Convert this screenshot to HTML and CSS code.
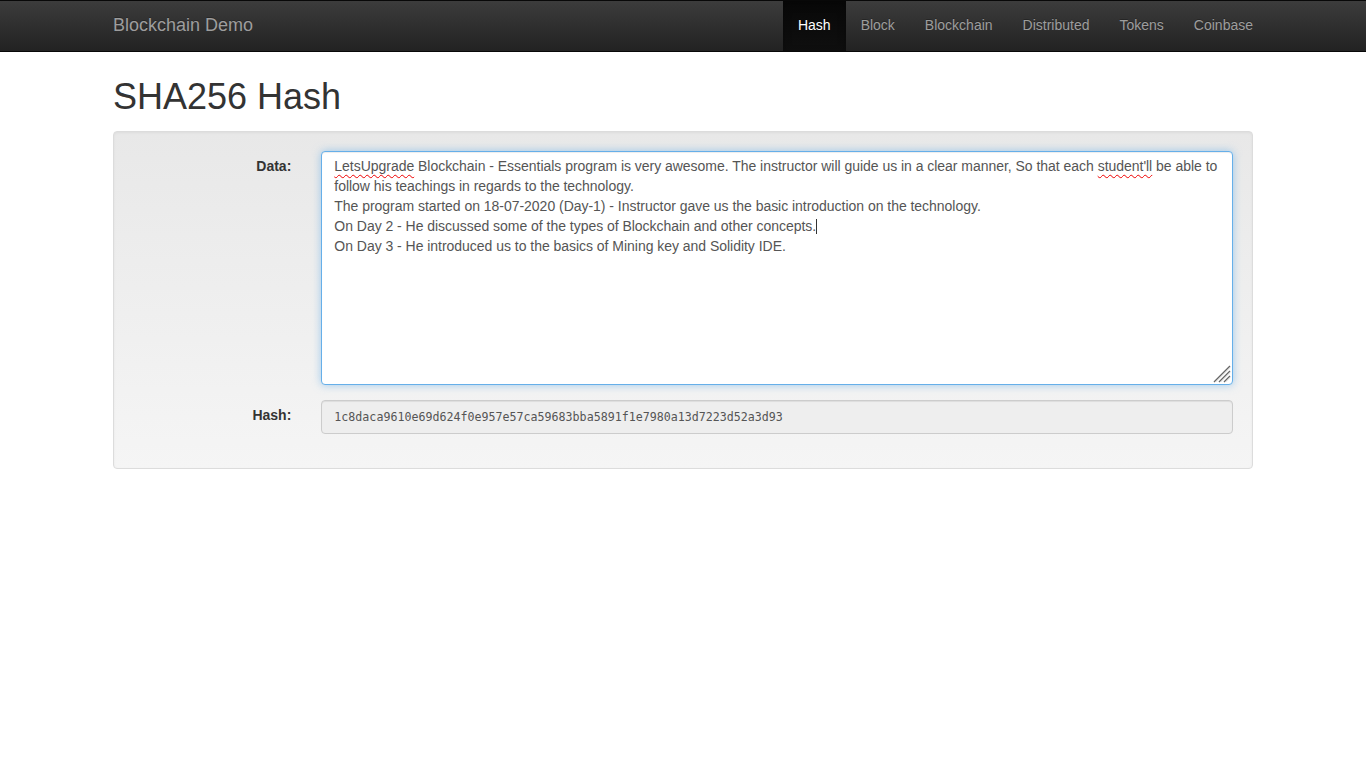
FILE: index.html
```html
<!DOCTYPE html>
<html lang="en">
<head>
<meta charset="utf-8">
<title>Blockchain Demo</title>
<link rel="stylesheet" href="styles.css">
</head>
<body>
<nav class="navbar">
  <div class="container navbar-inner">
    <a class="brand" href="#">Blockchain Demo</a>
    <ul class="nav">
      <li class="active"><a href="#">Hash</a></li>
      <li><a href="#">Block</a></li>
      <li><a href="#">Blockchain</a></li>
      <li><a href="#">Distributed</a></li>
      <li><a href="#">Tokens</a></li>
      <li><a href="#">Coinbase</a></li>
    </ul>
  </div>
</nav>
<main class="container">
  <h1 class="title">SHA256 Hash</h1>
  <div class="well">
    <div class="form-group">
      <label class="label">Data:</label>
      <div class="field">
        <div class="textarea" role="textbox" aria-multiline="true"><span class="spell">LetsUpgrade</span> Blockchain - Essentials program is very awesome. The instructor will guide us in a clear manner, So that each <span class="spell">student'll</span> be able to follow his teachings in regards to the technology.
The program started on 18-07-2020 (Day-1) - Instructor gave us the basic introduction on the technology.
On Day 2 - He discussed some of the types of Blockchain and other concepts.<span class="caret"></span>
On Day 3 - He introduced us to the basics of Mining key and Solidity IDE.<svg class="grip" width="18" height="18" viewBox="0 0 18 18"><path d="M17 1 L1 17 M17 6 L6 17 M17 11 L11 17" stroke="#666" stroke-width="1.4" fill="none"/><path d="M17 2.5 L2.5 17 M17 7.5 L7.5 17 M17 12.5 L12.5 17" stroke="#ccc" stroke-width="0.8" fill="none"/></svg></div>
      </div>
    </div>
    <div class="form-group">
      <label class="label">Hash:</label>
      <div class="field">
        <div class="input-hash">1c8daca9610e69d624f0e957e57ca59683bba5891f1e7980a13d7223d52a3d93</div>
      </div>
    </div>
  </div>
</main>
</body>
</html>
```
FILE: styles.css
```css
* { box-sizing: border-box; }
html, body { margin: 0; padding: 0; }
body {
  font-family: "Liberation Sans", Arial, Helvetica, sans-serif;
  font-size: 14px;
  line-height: 20px;
  color: #333;
  background: #fff;
}
.container {
  width: 1170px;
  margin: 0 auto;
  padding: 0 15px;
}
.navbar {
  background-image: linear-gradient(to bottom, #3c3c3c 0, #222 100%);
  border-top: 1px solid #080808;
  border-bottom: 1px solid #080808;
  height: 52px;
}
.navbar-inner {
  display: flex;
  justify-content: space-between;
  align-items: stretch;
  height: 50px;
}
.brand {
  margin-left: -15px;
  padding: 14px 15px 16px;
  font-size: 18px;
  line-height: 20px;
  color: #9d9d9d;
  text-decoration: none;
  text-shadow: 0 -1px 0 rgba(0,0,0,.25);
}
.nav {
  list-style: none;
  margin: 0 -15px 0 0;
  padding: 0;
  display: flex;
}
.nav li a {
  display: block;
  padding: 14px 15px 16px;
  line-height: 20px;
  color: #9d9d9d;
  text-decoration: none;
  text-shadow: 0 -1px 0 rgba(0,0,0,.25);
}
.nav li.active a {
  color: #fff;
  background-image: linear-gradient(to bottom, #080808 0, #0f0f0f 100%);
  box-shadow: inset 0 3px 9px rgba(0,0,0,.25);
}
.title {
  font-size: 36px;
  font-weight: 500;
  line-height: 39.6px;
  margin: 25px 0 14px;
  color: #333;
}
.well {
  padding: 19px;
  border: 1px solid #dcdcdc;
  border-radius: 4px;
  background-image: linear-gradient(to bottom, #e8e8e8 0, #f5f5f5 100%);
  box-shadow: inset 0 1px 3px rgba(0,0,0,.05), 0 1px 0 rgba(255,255,255,.1);
}
.form-group {
  display: flex;
  margin: 0 -15px 15px;
}
.label {
  width: 16.6667%;
  padding: 5px 15px 0;
  text-align: right;
  font-weight: bold;
}
.field {
  width: 83.3333%;
  padding: 0 15px;
}
.textarea {
  position: relative;
  height: 234px;
  padding: 4px 12px 8px;
  border: 1px solid #66afe9;
  border-radius: 4px;
  background: #fff;
  color: #555;
  white-space: pre-wrap;
  letter-spacing: -0.03px;
  box-shadow: inset 0 1px 1px rgba(0,0,0,.075), 0 0 8px rgba(102,175,233,.6);
}
.spell {
  text-decoration: underline wavy #e00;
  text-decoration-thickness: 1px;
  text-underline-offset: 3px;
}
.caret {
  display: inline-block;
  width: 1px;
  height: 15px;
  background: #333;
  vertical-align: -3px;
}
.grip {
  position: absolute;
  right: 1px;
  bottom: 1px;
}
.input-hash {
  height: 34px;
  padding: 6px 12px 7px;
  border: 1px solid #ccc;
  border-radius: 4px;
  background: #eee;
  color: #555;
  font-family: "DejaVu Sans Mono", monospace;
  font-size: 11.65px;
  line-height: 20px;
  box-shadow: inset 0 1px 1px rgba(0,0,0,.075);
}
```
